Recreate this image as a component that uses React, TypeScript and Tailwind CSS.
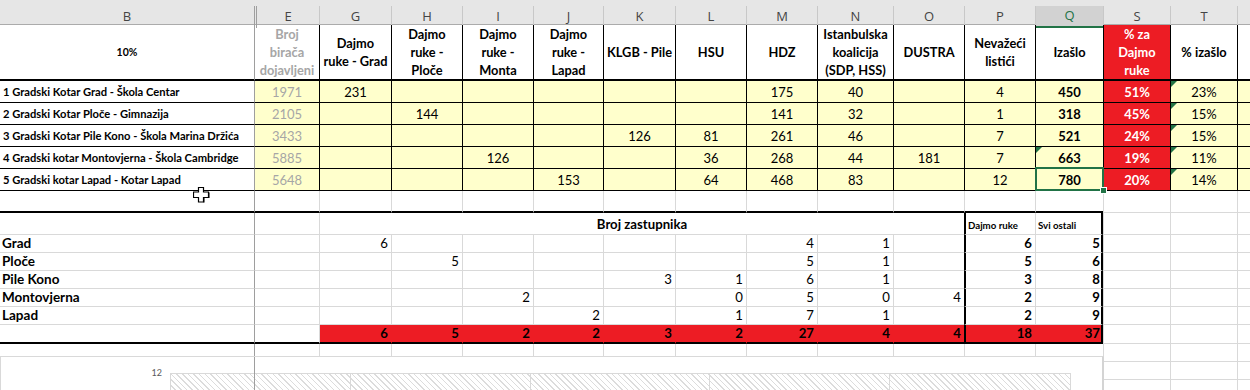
import React from "react";

const COLS =
  "grid grid-cols-[254px_65px_72px_71px_71px_70px_72px_71px_71px_76px_71px_71px_68px_67px_67px_1fr]";

const LETTERS = ["B", "E", "G", "H", "I", "J", "K", "L", "M", "N", "O", "P", "Q", "S", "T", ""];

const HEAD = [
  "10%",
  "Broj\nbirača\ndojavljeni",
  "Dajmo\nruke - Grad",
  "Dajmo\nruke -\nPloče",
  "Dajmo\nruke -\nMonta",
  "Dajmo\nruke -\nLapad",
  "KLGB - Pile",
  "HSU",
  "HDZ",
  "Istanbulska\nkoalicija\n(SDP, HSS)",
  "DUSTRA",
  "Nevažeći\nlistići",
  "Izašlo",
  "% za\nDajmo\nruke",
  "% izašlo",
  "",
];

const DATA = [
  ["1 Gradski Kotar Grad - Škola Centar", "1971", "231", "", "", "", "", "", "175", "40", "", "4", "450", "51%", "23%", ""],
  ["2 Gradski Kotar Ploče - Gimnazija", "2105", "", "144", "", "", "", "", "141", "32", "", "1", "318", "45%", "15%", ""],
  ["3 Gradski Kotar Pile Kono - Škola Marina Držića", "3433", "", "", "", "", "126", "81", "261", "46", "", "7", "521", "24%", "15%", ""],
  ["4 Gradski kotar Montovjerna - Škola Cambridge", "5885", "", "", "126", "", "", "36", "268", "44", "181", "7", "663", "19%", "11%", ""],
  ["5 Gradski kotar Lapad - Kotar Lapad", "5648", "", "", "", "153", "", "64", "468", "83", "", "12", "780", "20%", "14%", ""],
];

const SEATS = [
  ["Grad", "", "6", "", "", "", "", "", "4", "1", "", "6", "5"],
  ["Ploče", "", "", "5", "", "", "", "", "5", "1", "", "5", "6"],
  ["Pile Kono", "", "", "", "", "", "3", "1", "6", "1", "", "3", "8"],
  ["Montovjerna", "", "", "", "2", "", "", "0", "5", "0", "4", "2", "9"],
  ["Lapad", "", "", "", "", "2", "", "1", "7", "1", "", "2", "9"],
];

const TOTALS = ["", "", "6", "5", "2", "2", "3", "2", "27", "4", "4", "18", "37"];

const IDX16 = Array.from({ length: 16 }, (_, i) => i);

function Tri() {
  return (
    <div className="absolute left-0 top-0 w-0 h-0 border-t-[6px] border-t-[#217346] border-r-[6px] border-r-transparent" />
  );
}

function LetterRow() {
  return (
    <div
      className={`${COLS} h-[25px] bg-[#e6e6e6] border-b border-b-[#ababab] [font-family:Open_Sans,sans-serif] text-[13px] text-[#444]`}
    >
      {LETTERS.map((l, i) => (
        <div
          key={i}
          className={
            i === 0
              ? "mt-[6px] flex items-center justify-center"
              : i === 1
              ? "mt-[6px] flex items-center justify-center border-l-[3px] border-double border-l-[#9e9e9e]"
              : i === 12
              ? "mt-[6px] flex items-center justify-center border-l border-l-[#c8c8c8] bg-[#d2d2d2] text-[#217346] border-b-2 border-b-[#217346]"
              : "mt-[6px] flex items-center justify-center border-l border-l-[#c8c8c8]"
          }
        >
          {l}
        </div>
      ))}
    </div>
  );
}

function HeaderRow() {
  return (
    <div className={`${COLS} h-[56px] font-bold leading-[18px]`}>
      {HEAD.map((h, i) => (
        <div
          key={i}
          className={
            i === 0
              ? "flex items-center justify-center text-center whitespace-pre-line border-b-2 border-b-black text-[10.5px]"
              : i === 1
              ? "flex items-center justify-center text-center whitespace-pre-line border-b-2 border-b-black border-l border-l-[#9e9e9e] text-[#a6a6a6] text-[12.8px]"
              : i === 13
              ? "flex items-center justify-center text-center whitespace-pre-line border-b-2 border-b-black border-l border-l-black bg-[#ed1c24] text-white text-[12.8px]"
              : "flex items-center justify-center text-center whitespace-pre-line border-b-2 border-b-black border-l border-l-black text-[12.8px]"
          }
        >
          {h}
        </div>
      ))}
    </div>
  );
}

function DataRow({ row, r }: { row: string[]; r: number }) {
  return (
    <div className={`${COLS} h-[22px] text-[13px] leading-none`}>
      {row.map((v, i) => (
        <div
          key={i}
          className={
            i === 0
              ? "flex items-center pl-[3px] text-[11.2px] font-bold whitespace-nowrap border-b border-b-black"
              : i === 1
              ? "flex items-end justify-center pb-[3px] bg-[#ffffcc] text-[#a6a6a6] border-l border-l-[#9e9e9e] border-b border-b-black"
              : i === 12
              ? "relative flex items-end justify-center pb-[3px] bg-[#ffffcc] font-bold border-l border-l-black border-b border-b-black"
              : i === 13
              ? "flex items-end justify-center pb-[3px] bg-[#ed1c24] text-white font-bold border-l border-l-black border-b border-b-black"
              : i === 14
              ? "relative flex items-end justify-center pb-[3px] bg-[#ffffcc] border-l border-l-black border-b border-b-black"
              : "flex items-end justify-center pb-[3px] bg-[#ffffcc] border-l border-l-black border-b border-b-black"
          }
        >
          {i === 14 && <Tri />}
          {i === 12 && r === 3 && <Tri />}
          {v}
          {i === 12 && r === 4 && (
            <div className="absolute left-[-1px] top-[-2px] w-[69px] h-[24px] border-2 border-[#217346]">
              <div className="absolute right-[-5px] bottom-[-5px] w-[7px] h-[7px] bg-[#217346] border border-white" />
            </div>
          )}
        </div>
      ))}
    </div>
  );
}

function EmptyRow() {
  return (
    <div className={`${COLS} h-[22px]`}>
      {IDX16.map((i) => (
        <div
          key={i}
          className={
            i === 0
              ? "border-b-2 border-b-black"
              : i === 1
              ? "border-l border-l-[#9e9e9e] border-b-2 border-b-black"
              : i <= 12
              ? "border-l border-l-[#d9d9d9] border-b-2 border-b-black"
              : "border-l border-l-[#d9d9d9] border-b border-b-[#d9d9d9]"
          }
        />
      ))}
    </div>
  );
}

function TitleRow() {
  return (
    <div className={`${COLS} h-[22px] leading-none`}>
      <div className="border-b border-b-[#d9d9d9]" />
      <div className="border-l border-l-[#9e9e9e] border-b border-b-[#d9d9d9]" />
      <div className="col-span-9 flex items-end justify-center pb-[3px] font-bold text-[13.2px] border-l border-l-[#d9d9d9] border-b border-b-[#d9d9d9]">
        Broj zastupnika
      </div>
      <div className="flex items-end pl-[2px] pb-[3px] font-bold text-[9.7px] whitespace-nowrap border-l-2 border-l-black border-b border-b-[#d9d9d9]">
        Dajmo ruke
      </div>
      <div className="flex items-end pl-[2px] pb-[3px] font-bold text-[9.7px] whitespace-nowrap border-l border-l-[#d9d9d9] border-r-2 border-r-black border-b border-b-[#d9d9d9]">
        Svi ostali
      </div>
      <div className="border-l border-l-[#d9d9d9] border-b border-b-[#d9d9d9]" />
      <div className="border-l border-l-[#d9d9d9] border-b border-b-[#d9d9d9]" />
      <div className="border-l border-l-[#d9d9d9] border-b border-b-[#d9d9d9]" />
    </div>
  );
}

function SeatRow({ row }: { row: string[] }) {
  return (
    <div className={`${COLS} h-[18px] text-[13.2px] leading-none`}>
      {IDX16.map((i) => {
        const v = row[i] ?? "";
        return (
          <div
            key={i}
            className={
              i === 0
                ? "flex items-end pl-[2px] pb-[2px] font-bold text-[13.5px] border-b border-b-[#d9d9d9]"
                : i === 1
                ? "border-l border-l-[#9e9e9e] border-b border-b-[#d9d9d9]"
                : i === 11
                ? "flex items-end justify-end pr-[3px] pb-[2px] font-bold border-l-2 border-l-black border-b border-b-[#d9d9d9]"
                : i === 12
                ? "flex items-end justify-end pr-[1px] pb-[2px] font-bold border-l border-l-[#d9d9d9] border-r-2 border-r-black border-b border-b-[#d9d9d9]"
                : "flex items-end justify-end pr-[3px] pb-[2px] border-l border-l-[#d9d9d9] border-b border-b-[#d9d9d9]"
            }
          >
            {v}
          </div>
        );
      })}
    </div>
  );
}

function TotalRow() {
  return (
    <div className={`${COLS} h-[19px] text-[13.2px] leading-none font-bold`}>
      {IDX16.map((i) => {
        const v = TOTALS[i] ?? "";
        return (
          <div
            key={i}
            className={
              i === 0
                ? "border-b-2 border-b-black"
                : i === 1
                ? "border-l border-l-[#9e9e9e] border-b-2 border-b-black"
                : i === 2
                ? "flex items-end justify-end pr-[3px] pb-[2px] bg-[#ed1c24] border-l border-l-[#d9d9d9] border-b-2 border-b-black"
                : i === 11
                ? "flex items-end justify-end pr-[3px] pb-[2px] bg-[#ed1c24] border-l-2 border-l-black border-b-2 border-b-black"
                : i === 12
                ? "flex items-end justify-end pr-[1px] pb-[2px] bg-[#ed1c24] border-r-2 border-r-black border-b-2 border-b-black"
                : i <= 10
                ? "flex items-end justify-end pr-[3px] pb-[2px] bg-[#ed1c24] border-l border-l-[#ed1c24] border-b-2 border-b-black"
                : "border-l border-l-[#d9d9d9] border-b border-b-[#d9d9d9]"
            }
          >
            {v}
          </div>
        );
      })}
    </div>
  );
}

function FillerRow() {
  return (
    <div className={`${COLS} h-[18px]`}>
      {IDX16.map((i) => (
        <div
          key={i}
          className={
            i === 0
              ? "border-b border-b-[#d9d9d9]"
              : i === 1
              ? "border-l border-l-[#9e9e9e] border-b border-b-[#d9d9d9]"
              : "border-l border-l-[#d9d9d9] border-b border-b-[#d9d9d9]"
          }
        />
      ))}
    </div>
  );
}

function Chart() {
  return (
    <div className="absolute left-0 top-[356px] w-[1104px] h-[40px] bg-white border border-[#d9d9d9] border-r-2 border-r-[#d4d4d4] flex items-start">
      <div className="w-[169px] pr-[8px] mt-[11px] text-right text-[9px] leading-none text-[#595959]">12</div>
      <div className="mt-[16px] w-[901px] h-[30px] grid grid-cols-5 border-t border-l border-r border-[#d9d9d9] bg-[repeating-linear-gradient(45deg,#dcdcdc_0px,#dcdcdc_1px,#ffffff_1px,#ffffff_4px)]">
        <div className="border-r border-r-[#d9d9d9]" />
        <div className="border-r border-r-[#d9d9d9]" />
        <div className="border-r border-r-[#d9d9d9]" />
        <div className="border-r border-r-[#d9d9d9]" />
        <div />
      </div>
      <div className="absolute left-[253px] top-0 bottom-0 w-px bg-[#9e9e9e]" />
    </div>
  );
}

function Cursor() {
  return (
    <svg className="absolute left-[193px] top-[187px]" width="17" height="16" viewBox="0 0 17 16">
      <path
        d="M5.5 0.5 H10.5 V5 H15.5 V10.5 H10.5 V15 H5.5 V10.5 H0.5 V5 H5.5 Z"
        fill="#ffffff"
        stroke="#000000"
        strokeWidth="1.2"
      />
      <path d="M11 10.5 V15.5 M16 5.5 V11" stroke="#000" strokeWidth="1" />
    </svg>
  );
}

export default function App() {
  return (
    <div className="relative w-[1250px] h-[390px] overflow-hidden bg-white text-black [font-family:Lato,sans-serif]">
      <LetterRow />
      <HeaderRow />
      {DATA.map((row, r) => (
        <DataRow key={r} row={row} r={r} />
      ))}
      <EmptyRow />
      <TitleRow />
      {SEATS.map((row, r) => (
        <SeatRow key={r} row={row} />
      ))}
      <TotalRow />
      <FillerRow />
      <FillerRow />
      <FillerRow />
      <Chart />
      <Cursor />
    </div>
  );
}
